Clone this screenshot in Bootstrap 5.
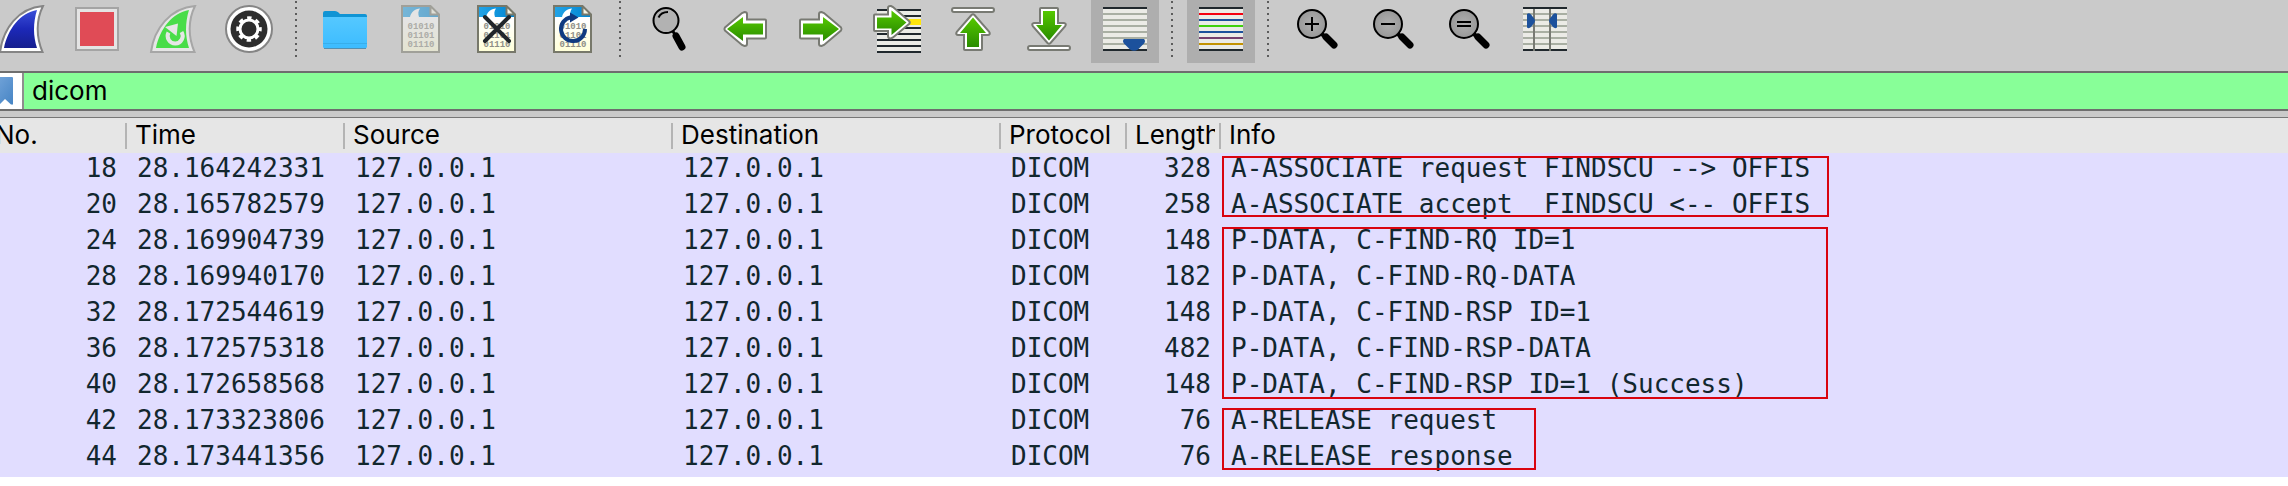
<!DOCTYPE html>
<html lang="en">
<head>
<meta charset="utf-8">
<meta name="viewport" content="width=device-width, initial-scale=1">
<title>Packet capture</title>
<link href="https://cdn.jsdelivr.net/npm/bootstrap@5.3.0/dist/css/bootstrap.min.css" rel="stylesheet">
<style>
  body { background: #fff; color: #000; font: 26px/30px Inter, "Liberation Sans", sans-serif; overflow-x: hidden; }
  /* the window is scrolled a little to the right, so its left edge is cut */
  .capture { margin-left: -13px; }
  .toolbar { background: #cacaca; margin-top: -5px; padding-bottom: 8px; gap: 8px; }
  .tool { width: 68px; height: 68px; border: 0; border-radius: 0; }
  .tool.active { background: #aeaeae; }
  .tool svg { width: 48px; height: 48px; display: block; }
  .divider { width: 2px; height: 56px; margin: 0 6px 0 4px;
    background: repeating-linear-gradient(#5c5c5c 0 2px, transparent 2px 6px); }
  .filter { border-top: 2px solid #6e6e6e; border-bottom: 2px solid #6e6e6e; height: 40px; }
  .mark-btn { width: 37px; background: #fff; border: 0; border-right: 2px solid #8e8e8e; border-radius: 0; padding: 0 0 0 13px; }
  .mark-btn svg { width: 22px; height: 36px; display: block; }
  .filter input { background: #88ff98; border: 0; border-radius: 0; padding: 0 8px; font: inherit; color: #000; outline: 0; min-width: 0; }
  .gutter { height: 7px; background: #cacaca; border-bottom: 1px solid #777; }
  .packets { width: 100%; table-layout: fixed; border-collapse: separate; border-spacing: 0; }
  .packets th { background: #e6e6e6 linear-gradient(#b4b4b4, #b4b4b4) no-repeat right center / 2px 26px;
    font-weight: 400; height: 35px; padding: 0 6px 2px 8px; }
  .packets th:last-child { background-image: none; }
  .packets th div { overflow: hidden; white-space: nowrap; }
  .packets td { background: #e1ddff; color: #12272e; font: 26px/30px "DejaVu Sans Mono", monospace;
    padding: 0 10px 6px; white-space: pre; }
  .packets .num { text-align: right; }
  .outline { position: absolute; left: 1px; top: 3px; border: 2px solid #d9040f; }
  .associate { width: 607px; height: 61px; }
  .find { width: 606px; height: 172px; top: 2px; }
  .release { width: 314px; height: 62px; }
</style>
</head>
<body>
<svg class="position-absolute" width="0" height="0" aria-hidden="true">
  <defs>
    <linearGradient id="blueFin" x1="0" y1="0" x2="0" y2="1"><stop offset="0" stop-color="#3a4fd8"/><stop offset=".5" stop-color="#1c28b8"/><stop offset="1" stop-color="#161f8e"/></linearGradient>
    <linearGradient id="green" x1="0" y1="0" x2="0" y2="1"><stop offset="0" stop-color="#55c800"/><stop offset="1" stop-color="#2a8c00"/></linearGradient>
    <linearGradient id="paper" x1="0" y1="0" x2="0" y2="1"><stop offset=".3" stop-color="#fff"/><stop offset="1" stop-color="#ffffd8"/></linearGradient>
    <linearGradient id="sky" x1="0" y1="0" x2="1" y2="0"><stop offset="0" stop-color="#22a3e6"/><stop offset="1" stop-color="#0086d2"/></linearGradient>
    <linearGradient id="folderFront" x1="0" y1="0" x2="0" y2="1"><stop offset="0" stop-color="#55c8ff"/><stop offset="1" stop-color="#3cbcff"/></linearGradient>
    <linearGradient id="ribbon" x1="0" y1="0" x2="1" y2="1"><stop offset="0" stop-color="#78a8dc"/><stop offset="1" stop-color="#4684c4"/></linearGradient>
    <radialGradient id="glass"><stop offset="0" stop-color="#b0b0b0"/><stop offset="1" stop-color="#989898"/></radialGradient>
  </defs>
  <symbol id="file" viewBox="0 0 48 48">
    <path d="M5 1h28.500l8.500 8.500V47H5z" fill="url(#paper)"/>
    <path d="M6 2h27l8 8v2H6z" fill="url(#sky)"/>
    <path d="M13 12C14 7 18 4 23 3.500C21 6 21 9 22 12z" fill="#fff"/>
    <path d="M33.500 1v8.500H42z" fill="#f4f4e4"/>
    <path d="M5 1h28.500l8.500 8.500V47H5zM33.500 1v8.500H42" fill="none" stroke="#77786a" stroke-width="2"/>
    <g font-family="Liberation Mono, monospace" font-size="9" font-weight="700" fill="#8e8e86" text-anchor="middle"><text x="24" y="24">01010</text><text x="24" y="33">01101</text><text x="24" y="42">01110</text></g>
  </symbol>
  <symbol id="arrow" viewBox="0 0 48 48">
    <path d="M4 14.500H22V9Q22 7 24.500 7L27 8L44 22.500Q45 24 44 25.500L27 40L24.500 41Q22 41 22 39V33.500H4Q3 33.500 3 32.500V15.500Q3 14.500 4 14.500z" fill="#fff" stroke="#787a73" stroke-width="2"/>
    <path d="M6 18.500H26V12L42 24L26 36V29.500H6z" fill="url(#green)"/>
  </symbol>
  <symbol id="lens" viewBox="0 0 48 48">
    <path d="M29 29l4 4" stroke="#000" stroke-width="4"/><path d="M33 32L41 40" stroke="#000" stroke-width="7" stroke-linecap="round"/>
    <circle cx="19" cy="19" r="14" fill="url(#glass)" stroke="#000" stroke-width="2"/>
  </symbol>
  <symbol id="sheet" viewBox="0 0 48 48">
    <path d="M2 2h44v44H2z" fill="#ebebe6"/><path d="M2 9h44M2 15h44M2 21h44M2 27h44M2 33h44M2 39h44" stroke="#a9afa3" stroke-width="2"/><path d="M2 3h44M2 45h44" stroke="#20282d" stroke-width="2"/>
  </symbol>
</svg>

<main class="capture">
  <div class="toolbar d-flex align-items-center" role="toolbar" aria-label="Main toolbar">
    <button class="btn tool d-flex align-items-center justify-content-center p-0 flex-shrink-0" aria-label="Start capture"><svg viewBox="0 0 48 48"><path d="M3 47C6 24 21 3 46 1C39 15 39 32 45.500 47z" fill="#fff" stroke="#858585" stroke-width="2"/><path d="M7 43C11 24 23 8 40 5C36 18 36 31 40 43z" fill="url(#blueFin)"/></svg></button>
    <button class="btn tool d-flex align-items-center justify-content-center p-0 flex-shrink-0" aria-label="Stop capture"><svg viewBox="0 0 48 48"><path d="M3 3h42v42H3z" fill="#e4e4e4" stroke="#a4a4a4" stroke-width="2"/><path d="M7 7h34v34H7z" fill="#e04b56"/></svg></button>
    <button class="btn tool d-flex align-items-center justify-content-center p-0 flex-shrink-0" aria-label="Restart capture"><svg viewBox="0 0 48 48"><path d="M2 47C5 24 21 3 46 1C39 15 39 32 45.500 47z" fill="#e6e6e6" stroke="#a6a6a6" stroke-width="2"/><path d="M7 43C11 24 23 8 40 5C36 18 36 31 40 43z" fill="#49dd49"/><path d="M19.500 27.500A7.500 7.500 0 1 0 32.500 27" fill="none" stroke="#e6e6e6" stroke-width="4"/><path d="M16 22L29 18.500L27.500 31z" fill="#e6e6e6"/></svg></button>
    <button class="btn tool d-flex align-items-center justify-content-center p-0 flex-shrink-0" aria-label="Capture options"><svg viewBox="0 0 48 48"><circle cx="24" cy="24" r="23" fill="#fff" stroke="#858585" stroke-width="2"/><circle cx="24" cy="24" r="18.500" fill="#2d2d2d"/><circle cx="24" cy="24" r="9" fill="none" stroke="#fff" stroke-width="3"/><circle cx="24" cy="24" r="11" fill="none" stroke="#fff" stroke-width="3.500" stroke-dasharray="4.320 4.320" stroke-dashoffset="2.160"/></svg></button>
    <div class="divider flex-shrink-0"></div>
    <button class="btn tool d-flex align-items-center justify-content-center p-0 flex-shrink-0" aria-label="Open file"><svg viewBox="0 0 48 48"><path d="M2 8Q2 6 4 6H14Q16 6 17.500 7.500L19 9H44Q46 9 46 11V20H2z" fill="#1094d4"/><path d="M2 12H46V41.500Q46 43.500 44 43.500H4Q2 43.500 2 41.500z" fill="url(#folderFront)"/><path d="M2 38.500H46" stroke="#38aeea"/><path d="M3 43.500H45" stroke="#558faf"/></svg></button>
    <button class="btn tool d-flex align-items-center justify-content-center p-0 flex-shrink-0" aria-label="Save file"><svg viewBox="0 0 48 48" opacity=".5"><use href="#file"/></svg></button>
    <button class="btn tool d-flex align-items-center justify-content-center p-0 flex-shrink-0" aria-label="Close file"><svg viewBox="0 0 48 48"><use href="#file"/><path d="M12 12L36 36M36 12L12 36" stroke="#20262b" stroke-width="4" stroke-linecap="round"/></svg></button>
    <button class="btn tool d-flex align-items-center justify-content-center p-0 flex-shrink-0" aria-label="Reload file"><svg viewBox="0 0 48 48"><use href="#file"/><path d="M36 24A12 12 0 1 1 22 12.200" fill="none" stroke="#0f3a80" stroke-width="4"/><path d="M21 7.500L29.500 12.500L21 17.500z" fill="#0f3a80"/></svg></button>
    <div class="divider flex-shrink-0"></div>
    <button class="btn tool d-flex align-items-center justify-content-center p-0 flex-shrink-0" aria-label="Find packet"><svg viewBox="0 0 48 48"><path d="M27 25l4 6" stroke="#000" stroke-width="3"/><path d="M31 31L37 42" stroke="#000" stroke-width="7" stroke-linecap="round"/><circle cx="21" cy="15.500" r="12.500" fill="#b2b2b2" stroke="#000" stroke-width="2"/><path d="M13.500 12.500Q16 7 23 7" fill="none" stroke="#000" stroke-width="2"/></svg></button>
    <button class="btn tool d-flex align-items-center justify-content-center p-0 flex-shrink-0" aria-label="Previous packet"><svg viewBox="0 0 48 48"><use href="#arrow" transform="matrix(-1 0 0 1 48 0)"/></svg></button>
    <button class="btn tool d-flex align-items-center justify-content-center p-0 flex-shrink-0" aria-label="Next packet"><svg viewBox="0 0 48 48"><use href="#arrow"/></svg></button>
    <button class="btn tool d-flex align-items-center justify-content-center p-0 flex-shrink-0" aria-label="Go to packet"><svg viewBox="0 0 48 48"><path d="M4 4h44v44H4z" fill="#ebebe6"/><path d="M4 5h44M4 11h44M4 23h44M4 29h44M4 35h44M4 41h44M4 47h44" stroke="#20282d" stroke-width="2"/><path d="M30 14h18v6H30z" fill="#ffe60a"/><path d="M2 9.500H15V3Q15 .8 18 1L20 2L36 16Q37.500 17.500 36 19L20 32.500L18 33.500Q15 33.500 15 31V26H2Q1 26 1 25V10.500Q1 9.500 2 9.500z" fill="#fff" stroke="#787a73" stroke-width="2"/><path d="M4 12.500H18.500V5.500L33.500 17.500L18.500 30V23.500H4z" fill="url(#green)"/></svg></button>
    <button class="btn tool d-flex align-items-center justify-content-center p-0 flex-shrink-0" aria-label="First packet"><svg viewBox="0 0 48 48"><rect x="3" y="3" width="42" height="4" rx="2" fill="#fff" stroke="#787a73" stroke-width="2"/><path d="M22.500 10Q24 8.500 25.500 10L40 26.500Q42 29.500 39 30H33V44Q33 45 32 45H16Q15 45 15 44V30H9Q6 29.500 8 26.500z" fill="#fff" stroke="#787a73" stroke-width="2"/><path d="M24 12.500L37 28H30V42H18V28H11z" fill="url(#green)"/></svg></button>
    <button class="btn tool d-flex align-items-center justify-content-center p-0 flex-shrink-0" aria-label="Last packet"><svg viewBox="0 0 48 48"><rect x="3" y="41" width="42" height="4" rx="2" fill="#fff" stroke="#787a73" stroke-width="2"/><path d="M22.500 38Q24 39.500 25.500 38L40 21.500Q42 18.500 39 18H33V4Q33 3 32 3H16Q15 3 15 4V18H9Q6 18.500 8 21.500z" fill="#fff" stroke="#787a73" stroke-width="2"/><path d="M24 35.500L37 20H30V6H18V20H11z" fill="url(#green)"/></svg></button>
    <button class="btn tool active d-flex align-items-center justify-content-center p-0 flex-shrink-0" aria-label="Auto scroll" aria-pressed="true"><svg viewBox="0 0 48 48"><use href="#sheet"/><path d="M23 34H43Q45 36 43 38.500L37 44.500Q33 47 29 44.500L23 38.500Q21 36 23 34z" fill="#1c519c"/></svg></button>
    <div class="divider flex-shrink-0"></div>
    <button class="btn tool active d-flex align-items-center justify-content-center p-0 flex-shrink-0" aria-label="Colorize packets" aria-pressed="true"><svg viewBox="0 0 48 48"><use href="#sheet"/><g stroke-width="2"><path d="M2 9h44" stroke="#f40010"/><path d="M2 15h44M2 27h44" stroke="#1c519c"/><path d="M2 21h44" stroke="#3fd00c"/><path d="M2 33h44" stroke="#75406e"/><path d="M2 39h44" stroke="#c39200"/></g></svg></button>
    <div class="divider flex-shrink-0"></div>
    <button class="btn tool d-flex align-items-center justify-content-center p-0 flex-shrink-0" aria-label="Zoom in"><svg viewBox="0 0 48 48"><use href="#lens"/><path d="M12 19h14M19 12v14" stroke="#000" stroke-width="2"/></svg></button>
    <button class="btn tool d-flex align-items-center justify-content-center p-0 flex-shrink-0" aria-label="Zoom out"><svg viewBox="0 0 48 48"><use href="#lens"/><path d="M12 19h14" stroke="#000" stroke-width="2"/></svg></button>
    <button class="btn tool d-flex align-items-center justify-content-center p-0 flex-shrink-0" aria-label="Normal size"><svg viewBox="0 0 48 48"><use href="#lens"/><path d="M12 17h14M12 21h14" stroke="#000" stroke-width="2"/></svg></button>
    <button class="btn tool d-flex align-items-center justify-content-center p-0 flex-shrink-0" aria-label="Resize columns"><svg viewBox="0 0 48 48"><use href="#sheet"/><path d="M13 4v42M29 4v42" stroke="#787a73" stroke-width="2"/><path d="M6 9Q8 7.500 10 9.500L13.500 14Q14.500 16 13.500 17.500L10 22Q8 24 6 22.500zM36 9Q34 7.500 32 9.500L28.500 14Q27.500 16 28.500 17.500L32 22Q34 24 36 22.500z" fill="#1c519c"/></svg></button>
  </div>

  <form class="filter d-flex">
    <button type="button" class="btn mark-btn flex-shrink-0" aria-label="Filter bookmarks"><svg viewBox="0 0 22 36"><path d="M-8 4H12Q13 4 13 5V31.500H11L5 26L-1 32H-8z" fill="url(#ribbon)"/></svg></button>
    <input type="text" class="flex-grow-1" value="dicom" aria-label="Display filter" spellcheck="false">
  </form>
  <div class="gutter"></div>

  <table class="packets">
    <colgroup><col style="width:140px"><col style="width:218px"><col style="width:328px"><col style="width:328px"><col style="width:126px"><col style="width:94px"><col></colgroup>
    <thead>
      <tr><th scope="col"><div>No.</div></th><th scope="col"><div>Time</div></th><th scope="col"><div>Source</div></th><th scope="col"><div>Destination</div></th><th scope="col"><div>Protocol</div></th><th scope="col"><div>Length</div></th><th scope="col"><div>Info</div></th></tr>
    </thead>
    <tbody>
      <tr><td class="num">18</td><td>28.164242331</td><td>127.0.0.1</td><td>127.0.0.1</td><td>DICOM</td><td class="num">328</td><td class="position-relative">A-ASSOCIATE request FINDSCU --&gt; OFFIS<span class="outline associate"></span></td></tr>
      <tr><td class="num">20</td><td>28.165782579</td><td>127.0.0.1</td><td>127.0.0.1</td><td>DICOM</td><td class="num">258</td><td>A-ASSOCIATE accept  FINDSCU &lt;-- OFFIS</td></tr>
      <tr><td class="num">24</td><td>28.169904739</td><td>127.0.0.1</td><td>127.0.0.1</td><td>DICOM</td><td class="num">148</td><td class="position-relative">P-DATA, C-FIND-RQ ID=1<span class="outline find"></span></td></tr>
      <tr><td class="num">28</td><td>28.169940170</td><td>127.0.0.1</td><td>127.0.0.1</td><td>DICOM</td><td class="num">182</td><td>P-DATA, C-FIND-RQ-DATA</td></tr>
      <tr><td class="num">32</td><td>28.172544619</td><td>127.0.0.1</td><td>127.0.0.1</td><td>DICOM</td><td class="num">148</td><td>P-DATA, C-FIND-RSP ID=1</td></tr>
      <tr><td class="num">36</td><td>28.172575318</td><td>127.0.0.1</td><td>127.0.0.1</td><td>DICOM</td><td class="num">482</td><td>P-DATA, C-FIND-RSP-DATA</td></tr>
      <tr><td class="num">40</td><td>28.172658568</td><td>127.0.0.1</td><td>127.0.0.1</td><td>DICOM</td><td class="num">148</td><td>P-DATA, C-FIND-RSP ID=1 (Success)</td></tr>
      <tr><td class="num">42</td><td>28.173323806</td><td>127.0.0.1</td><td>127.0.0.1</td><td>DICOM</td><td class="num">76</td><td class="position-relative">A-RELEASE request<span class="outline release"></span></td></tr>
      <tr><td class="num">44</td><td>28.173441356</td><td>127.0.0.1</td><td>127.0.0.1</td><td>DICOM</td><td class="num">76</td><td>A-RELEASE response</td></tr>
    </tbody>
  </table>
</main>
<script src="https://cdn.jsdelivr.net/npm/bootstrap@5.3.0/dist/js/bootstrap.bundle.min.js"></script>
</body>
</html>
